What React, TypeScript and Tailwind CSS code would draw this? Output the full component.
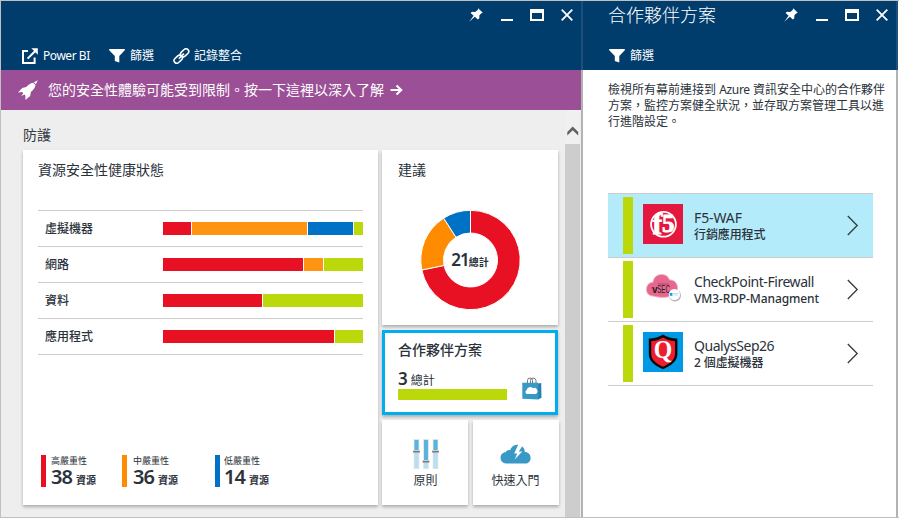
import React from 'react';

const latin = `font-['Noto_Sans','Noto_Sans_CJK_TC',sans-serif]`;

function PinIcon() {
  return (
    <svg className="block h-[14px] w-[14px]" viewBox="0 0 14 14" fill="#fff">
      <path d="M9.2 0.2 13.8 4.7 12.4 5.3 10.4 7.3 10.3 10.3 8.9 11.6 5.8 8.8 0.2 13.8 4.6 7.7 1.6 5 3 3.8 6.2 3.9 8.7 1.9Z" />
    </svg>
  );
}

function WindowButtons() {
  return (
    <div className="flex h-[14px] items-start">
      <PinIcon />
      <div className="mt-[11px] ml-[18px] h-[2px] w-[12px] bg-white" />
      <div className="mt-px ml-[17px] h-[12px] w-[14px] border-2 border-t-4 border-white" />
      <svg className="mt-px ml-[17px] block h-[12px] w-[12px]" viewBox="0 0 12 12" stroke="#fff" strokeWidth="1.8" fill="none">
        <path d="M0.7 0.7 11.3 11.3M11.3 0.7 0.7 11.3" />
      </svg>
    </div>
  );
}

function FunnelIcon() {
  return (
    <svg className="block h-[14px] w-[16px]" viewBox="0 0 16 14" fill="#fff">
      <path d="M0.2 0H15.8V1.2L10.3 7V13.6L5.8 12V7L0.2 1.2Z" />
    </svg>
  );
}

function OpenIcon() {
  return (
    <svg className="block h-[16px] w-[16px]" viewBox="0 0 16 16" fill="none" stroke="#fff" strokeWidth="2">
      <path d="M6 3H1V15H12.6V9.5" />
      <path d="M5.6 10.6 13 3.2" />
      <path d="M9.4 0.3H15.8V6.7Z" fill="#fff" stroke="none" />
    </svg>
  );
}

function LinkIcon() {
  return (
    <svg className="block h-[16px] w-[17px]" viewBox="0 0 17 16" fill="none" stroke="#fff" strokeWidth="1.6">
      <rect x="-4.6" y="-2.7" width="9.2" height="5.4" rx="2.7" transform="translate(11.6 4.8) rotate(-43)" />
      <rect x="-4.6" y="-2.7" width="9.2" height="5.4" rx="2.7" transform="translate(5.2 11.2) rotate(-43)" />
      <path d="M5.8 10.7 11 5.6" />
    </svg>
  );
}

function RocketIcon() {
  return (
    <svg className="block h-[20px] w-[20px]" viewBox="0 0 20 20" fill="#fff">
      <path d="M15.9 2.3 19.8 0.2 17.8 4.3Z" />
      <path d="M15.1 2.7 17.5 5C17.1 7.6 15.8 9.6 12.9 12.1L12.2 16 7.4 20V15.4L6.3 14.4 3.1 16.3 5.2 13.2 4.2 12.1 0 12.6 4.2 7.9 8.2 7.1C10.4 4.5 12.2 3.3 15.1 2.7Z" />
    </svg>
  );
}

function BagIcon() {
  return (
    <svg className="block h-[23px] w-[20px]" viewBox="0 0 20 23">
      <path d="M5.5 8V3.5Q5.5 1 8 1T10.5 3.5V8M8.5 7V3.5Q8.5 1 11 1T14 3.5V7" fill="none" stroke="#777" strokeWidth="1" />
      <path d="M16 6.5 19.2 6 19.5 20.8 16 22.5Z" fill="#2b7fad" />
      <path d="M0.3 5.7H16.3V22.5L0.3 21.8Z" fill="#3999c6" />
      <path d="M4.8 17A2.3 2.3 0 0 1 4.6 12.9 3.6 3.6 0 0 1 10.8 11.2 3 3 0 0 1 13.6 17Z" fill="#fff" />
    </svg>
  );
}

function SlidersIcon() {
  const tracks = [
    { x: 1, knob: 11.5 },
    { x: 10.5, knob: 21.5 },
    { x: 20, knob: 11.5 },
  ];
  return (
    <svg className="block h-[30px] w-[26px]" viewBox="0 0 26 30">
      {tracks.map((t) => (
        <g key={t.x}>
          <rect x={t.x - 0.3} y="0" width="5.6" height="30" fill="#dce3e6" />
          <rect x={t.x + 0.5} y="1" width="4" height="28" fill="#b8dff0" />
          <rect x={t.x + 0.5} y="1" width="4" height={t.knob} fill="#59b4d9" />
          <rect x={t.x - 0.9} y={t.knob + 0.5} width="6.8" height="1.5" fill="#7a7a7a" />
          <rect x={t.x - 0.9} y={t.knob - 0.5} width="6.8" height="1" fill="#d0d0d0" />
        </g>
      ))}
    </svg>
  );
}

function CloudBoltIcon() {
  return (
    <svg className="block h-[20px] w-[31px]" viewBox="0 0 31 20">
      <path d="M5.8 19.5A5.4 5.4 0 0 1 0.5 14C0.5 10.4 3 8.2 5.8 8.3 6.4 6.5 8.6 5.6 10.2 6.3 11.2 2.8 14 0.7 17.3 0.7 21.9 0.7 24.8 4 24.8 8.1 28.3 8.1 30.6 10.7 30.6 13.9 30.6 17.2 28.2 19.5 25.3 19.5Z" fill="#3999c6" />
      <path d="M18.5 0 14.2 9.4H17.2L14.7 15.5 22.3 7.4H18.8L22.8 1.3Z" fill="#fff" />
    </svg>
  );
}

function Donut() {
  const arc = (a: number, b: number) => {
    const pt = (deg: number, r: number) => {
      const t = (deg * Math.PI) / 180;
      return `${50 + r * Math.sin(t)} ${50 - r * Math.cos(t)}`;
    };
    const big = b - a > 180 ? 1 : 0;
    return `M${pt(a, 49.7)}A49.7 49.7 0 ${big} 1 ${pt(b, 49.7)}L${pt(b, 27)}A27 27 0 ${big} 0 ${pt(a, 27)}Z`;
  };
  return (
    <svg className="block h-[100px] w-[100px]" viewBox="-0.5 0 100 100" stroke="#fff" strokeWidth="1">
      <path d={arc(0, 258.4)} fill="#e81123" />
      <path d={arc(258.4, 327.4)} fill="#ff8c00" />
      <path d={arc(327.4, 360)} fill="#0072c6" />
    </svg>
  );
}

function F5Logo() {
  return (
    <svg className="block h-10 w-10" viewBox="0 0 40 40">
      <rect width="40" height="40" fill="#e4173e" />
      <circle cx="20.5" cy="20.3" r="12.4" fill="none" stroke="#fff" strokeWidth="1.8" />
      <g fontFamily="Liberation Serif, serif" fontWeight="bold" fill="#fff" stroke="#fff" strokeWidth="0.8">
        <text x="9.5" y="29.5" fontSize="29">f</text>
        <text x="19" y="27.8" fontSize="25">5</text>
      </g>
    </svg>
  );
}

function CheckPointLogo() {
  return (
    <svg className="block h-10 w-10" viewBox="0 0 40 40">
      <path d="M10 28C5.8 27.8 3.5 25.2 3.5 21.5 3.5 17.5 6 14.3 10 14.3 10.5 9.5 14 6.5 18.5 6.5 22.5 6.5 25.5 8.5 26.5 12 31.5 11.5 34.5 15.5 34.5 20 34.5 25 31.5 28.5 27 28.5 21 30 15 29.5 10 28Z" fill="#e8678f" stroke="#f2aec3" strokeWidth="0.9" />
      <path d="M15 16H25.5" stroke="#a93b5e" strokeWidth="0.8" />
      <text x="9" y="25" fontFamily="Liberation Sans, sans-serif" fontWeight="bold" fontSize="10" fill="#222">v</text>
      <text x="14.3" y="25" fontFamily="Liberation Sans, sans-serif" fontSize="10.5" textLength="12.5" lengthAdjust="spacingAndGlyphs" fill="#222">SEC</text>
      <circle cx="32" cy="27.5" r="6" fill="#b5b5b5" />
      <circle cx="31.4" cy="26.5" r="5.6" fill="#fff" />
      <rect x="26.8" y="25" width="2.6" height="2.8" fill="#00a4ef" />
      <path d="M30.3 25.5H35.5M30.3 27H35" stroke="#a5dbf5" strokeWidth="0.8" />
    </svg>
  );
}

function QualysLogo() {
  return (
    <svg className="block h-10 w-10" viewBox="0 0 40 40">
      <rect width="40" height="40" fill="#0099e5" />
      <path d="M20 2.5C24 5.3 29 6.5 34.4 6.5V22C34.4 29 28.500 33.5 20 37.3 11.5 33.5 5.8 29 5.8 22V6.5C11 6.5 16 5.3 20 2.5Z" fill="#090909" />
      <path d="M20 5.5C24 7.9 27.5 9 32 9.2V21.7C32 27.8 27 31.5 20 34.7 13 31.5 8.2 27.8 8.2 21.7V9.2C12.5 9 16 7.9 20 5.5Z" fill="#ed1c2e" />
      <text x="20" y="26" textAnchor="middle" fontFamily="Liberation Serif, serif" fontWeight="bold" fontSize="26" textLength="18.5" lengthAdjust="spacingAndGlyphs" fill="#fff">Q</text>
    </svg>
  );
}

const RED = 'bg-[#e81123]';
const ORANGE = 'bg-[#ff9412]';
const BLUE = 'bg-[#0072c6]';
const GREEN = 'bg-[#bad80a]';

const health = [
  { name: '虛擬機器', parts: [[28, RED], [115, ORANGE], [45, BLUE], [9, GREEN]] },
  { name: '網路', parts: [[140, RED], [19, ORANGE], [39, GREEN]] },
  { name: '資料', parts: [[99, RED], [100, GREEN]] },
  { name: '應用程式', parts: [[171, RED], [28, GREEN]] },
] as { name: string; parts: [number, string][] }[];

const severities = [
  { label: '高嚴重性', value: 38, bar: 'bg-[#e81123]', width: 'w-[81px]', gap: 'ml-[5px]' },
  { label: '中嚴重性', value: 36, bar: 'bg-[#ff8c00]', width: 'w-[93px]', gap: 'ml-[6px]' },
  { label: '低嚴重性', value: 14, bar: 'bg-[#0072c6]', width: 'w-[81px]', gap: 'ml-[4px]' },
];

const partners = [
  { name: 'F5-WAF', sub: '行銷應用程式', logo: <F5Logo />, bg: 'bg-[#b3ebfb]', spacing: 'tracking-[-0.1px]' },
  { name: 'CheckPoint-Firewall', sub: 'VM3-RDP-Managment', logo: <CheckPointLogo />, bg: 'bg-white', spacing: 'tracking-[-0.45px]' },
  { name: 'QualysSep26', sub: '2 個虛擬機器', logo: <QualysLogo />, bg: 'bg-white', spacing: 'tracking-[-0.45px]' },
];

const cardShadow = 'shadow-[0_2px_3px_rgba(0,0,0,0.28)]';

function SecurityBlade() {
  return (
    <section className="flex w-[580px] shrink-0 flex-col bg-[#eee]">
      <header className="flex h-[69px] flex-col bg-[#003c6c] pt-[7px] pl-[21px] text-white">
        <div className="flex justify-end pr-[8px]">
          <WindowButtons />
        </div>
        <div className="mt-[26px] flex h-[16px] items-center text-[12px] leading-[16px]">
          <OpenIcon />
          <span className="ml-[5px] w-[66px] whitespace-nowrap tracking-[-0.45px]">Power BI</span>
          <FunnelIcon />
          <span className="ml-[5px] w-[43px]">篩選</span>
          <LinkIcon />
          <span className="ml-[4px]">記錄整合</span>
        </div>
      </header>
      <div className="flex h-10 shrink-0 items-center bg-[#9b4f96] pl-[17px] text-white">
        <RocketIcon />
        <span className="ml-[10px] text-[14px] leading-5">您的安全性體驗可能受到限制。按一下這裡以深入了解</span>
        <svg className="ml-[6px] block h-[12px] w-[13px]" viewBox="0 0 13 12" fill="none" stroke="#fff" strokeWidth="2">
          <path d="M0.5 6H11M6.5 1.5 11.3 6 6.5 10.5" />
        </svg>
      </div>
      <div className="flex flex-1">
        <div className="flex w-[563px] flex-col pl-[22px]">
          <h2 className="mt-[15px] h-[25px] text-[14px] leading-5 text-[#333a42]">防護</h2>
          <div className="flex gap-1">
            <div className={`flex h-[355px] w-[355px] flex-col bg-white pt-[10px] pl-[15px] ${cardShadow}`}>
              <h3 className="h-5 text-[14px] leading-5 whitespace-nowrap">資源安全性健康狀態</h3>
              <div className="mt-[30px] w-[325px] border-b border-[#ccc]">
                {health.map((row) => (
                  <div key={row.name} className="flex h-9 items-center border-t border-[#ccc] pl-[7px]">
                    <span className="w-[118px] text-[12px] leading-4 font-medium">{row.name}</span>
                    <div className="flex h-[13px] gap-px">
                      {row.parts.map(([w, color], i) => (
                        <div key={i} className={color} style={{ width: w }} />
                      ))}
                    </div>
                  </div>
                ))}
              </div>
              <div className="mt-[100px] ml-[3px] flex h-8">
                {severities.map((s) => (
                  <div key={s.label} className={`flex ${s.width}`}>
                    <div className={`w-[5px] ${s.bar}`} />
                    <div className={`flex flex-col whitespace-nowrap ${s.gap}`}>
                      <span className="h-[14px] text-[9px] leading-[11px]">{s.label}</span>
                      <span className="flex h-[20px] items-baseline leading-[20px]">
                        <b className="text-[20px] leading-[20px] font-semibold tracking-[-0.9px]">{s.value}</b>
                        <span className="ml-[4px] text-[10px] leading-[12px] font-bold">資源</span>
                      </span>
                    </div>
                  </div>
                ))}
              </div>
            </div>
            <div className="flex w-[177px] flex-col gap-[5px]">
              <div className={`flex h-[175px] w-[176px] flex-col bg-white pt-[10px] ${cardShadow}`}>
                <h3 className="ml-4 h-5 text-[14px] leading-5">建議</h3>
                <div className="mt-[30px] ml-[38px] grid h-[100px] w-[100px] place-items-center *:col-start-1 *:row-start-1">
                  <Donut />
                  <span className="mt-[2px] flex items-baseline leading-6 whitespace-nowrap">
                    <b className="text-[17px] font-semibold tracking-[-1px]">21</b>
                    <span className="text-[10px] font-bold">總計</span>
                  </span>
                </div>
              </div>
              <div className={`flex h-[85px] w-[176px] flex-col border-3 border-[#00adef] bg-white pt-[7px] pl-[13px] ${cardShadow}`}>
                <h3 className="h-5 text-[14px] leading-5 font-medium">合作夥伴方案</h3>
                <div className="mt-[6px] flex">
                  <div className="w-[109px]">
                    <div className="flex h-[23px] items-baseline leading-[25px]">
                      <b className="text-[17px] font-semibold">3</b>
                      <span className="ml-[3px] text-[12px]">總計</span>
                    </div>
                    <div className="h-[11px] bg-[#bad80a]" />
                  </div>
                  <div className="mt-[11px] ml-[15px]">
                    <BagIcon />
                  </div>
                </div>
              </div>
              <div className="flex gap-[5px]">
                <div className={`flex h-[85px] w-[86px] flex-col items-center bg-white pt-[19px] pl-px ${cardShadow}`}>
                  <SlidersIcon />
                  <span className="mt-[4px] text-[12px] leading-4">原則</span>
                </div>
                <div className={`flex h-[85px] w-[86px] flex-col items-center bg-white pt-[24px] pr-px ${cardShadow}`}>
                  <CloudBoltIcon />
                  <span className="mt-[9px] text-[12px] leading-4">快速入門</span>
                </div>
              </div>
            </div>
          </div>
        </div>
        <div className="ml-px flex w-[15px] flex-col bg-[#f0f0f0]">
          <svg className="mt-[16px] ml-[2px] block h-[10px] w-[12px]" viewBox="0 0 12 10">
            <path d="M5.7 0.5 11.2 6V9.5L5.7 4.3 0.3 9.5V6Z" fill="#606060" />
          </svg>
          <div className="mt-[8px] flex-1 bg-[#cdcdcd]" />
        </div>
      </div>
    </section>
  );
}

function PartnerBlade() {
  return (
    <section className="flex w-[313px] shrink-0 flex-col bg-white">
      <header className="flex h-[69px] flex-col bg-[#003c6c] pl-[25px] text-white">
        <div className="flex h-[33px] justify-between pr-[8px]">
          <h1 className="mt-px text-[18px] leading-[26px] font-light">合作夥伴方案</h1>
          <div className="mt-[7px]">
            <WindowButtons />
          </div>
        </div>
        <div className="mt-[14px] ml-px flex h-[16px] items-center text-[12px] leading-4">
          <FunnelIcon />
          <span className="ml-[5px]">篩選</span>
        </div>
      </header>
      <p className="mt-[12px] ml-[25px] text-[12px] leading-4 whitespace-nowrap">
        檢視所有幕前連接到 <span className="tracking-[-0.3px]">Azure</span> 資訊安全中心的合作夥伴
        <br />
        方案，監控方案健全狀況，並存取方案管理工具以進
        <br />
        行進階設定。
      </p>
      <div className="mt-[63px] ml-[25px] w-[265px] border-b border-[#ccc]">
        {partners.map((p) => (
          <div key={p.name} className={`flex h-16 border-t border-[#ccc] pt-[3px] pl-[15px] ${p.bg}`}>
            <div className="h-[57px] w-[10px] bg-[#bad80a]" />
            <div className="mt-[7px] ml-[10px]">{p.logo}</div>
            <div className="mt-[12px] ml-[11px] flex w-[153px] flex-col whitespace-nowrap">
              <span className={`h-[18px] text-[14px] leading-[17px] ${p.spacing}`}>{p.name}</span>
              <span className="text-[12px] leading-4 font-medium tracking-[-0.1px]">{p.sub}</span>
            </div>
            <svg className="mt-[18px] block h-[21px] w-[12px]" viewBox="0 0 12 21" fill="none" stroke="#333a42" strokeWidth="1.3">
              <path d="M0.8 1 10.2 10.5 0.8 20" />
            </svg>
          </div>
        ))}
      </div>
    </section>
  );
}

export default function App() {
  return (
    <main className={`flex h-[518px] w-[899px] overflow-hidden border border-r-0 border-[#c0c0c0] bg-white text-[#2b323a] ${latin}`}>
      <SecurityBlade />
      <div className="flex w-[2px] flex-col bg-[#b3b3b3]">
        <div className="h-[69px] bg-[#1d4f7a]" />
      </div>
      <PartnerBlade />
      <div className="flex w-[2px] flex-col bg-[#b3b3b3]">
        <div className="h-[69px] bg-[#1d4f7a]" />
      </div>
    </main>
  );
}
